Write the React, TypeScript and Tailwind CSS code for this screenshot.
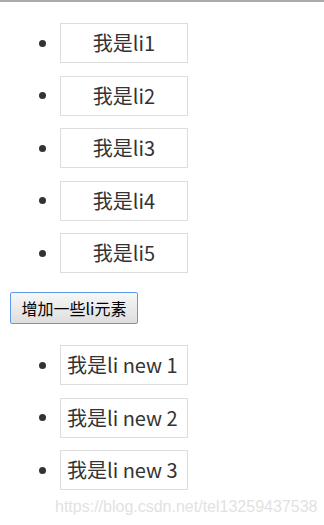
const items = ['我是li1', '我是li2', '我是li3', '我是li4', '我是li5'];
const newItems = ['我是li new 1', '我是li new 2', '我是li new 3'];

const Bullet = () => (
  <span className="ml-[39px] mr-[14px] h-[7px] w-[7px] shrink-0 rounded-full bg-[#333]" />
);

const App = () => {
  return (
    <div
      className="h-[525px] w-[324px] overflow-hidden bg-white text-[#333]"
      style={{ fontFamily: '"Noto Sans CJK SC", "Liberation Sans", sans-serif' }}
    >
      <div className="h-[2px] bg-[#ababab]" />

      <ul className="mt-[21px] flex flex-col gap-[12.5px]">
        {items.map((text) => (
          <li key={text} className="flex items-center">
            <Bullet />
            <div className="flex h-[40px] w-[128px] items-center justify-center border border-[#dddddd] text-[20px]">
              {text}
            </div>
          </li>
        ))}
      </ul>

      <button className="ml-[10px] mt-[19px] flex h-[32px] w-[128px] items-center justify-center rounded-[2px] border border-[#5b9bea] bg-gradient-to-b from-[#f7f7f7] to-[#dedede] text-[16px] text-black">
        增加一些li元素
      </button>

      <ul className="mt-[21px] flex flex-col gap-[12.5px]">
        {newItems.map((text) => (
          <li key={text} className="flex items-center">
            <Bullet />
            <div className="flex h-[40px] w-[128px] items-center whitespace-nowrap border border-[#dddddd] pl-[6px] text-[20px]">
              {text}
            </div>
          </li>
        ))}
      </ul>

      <div
        className="ml-[55px] mt-[7px] text-[16px] leading-[20px] text-[#e2e2e2]"
        style={{ fontFamily: '"Liberation Sans", Arial, sans-serif' }}
      >
        https://blog.csdn.net/tel13259437538
      </div>
    </div>
  );
};

export default App;
